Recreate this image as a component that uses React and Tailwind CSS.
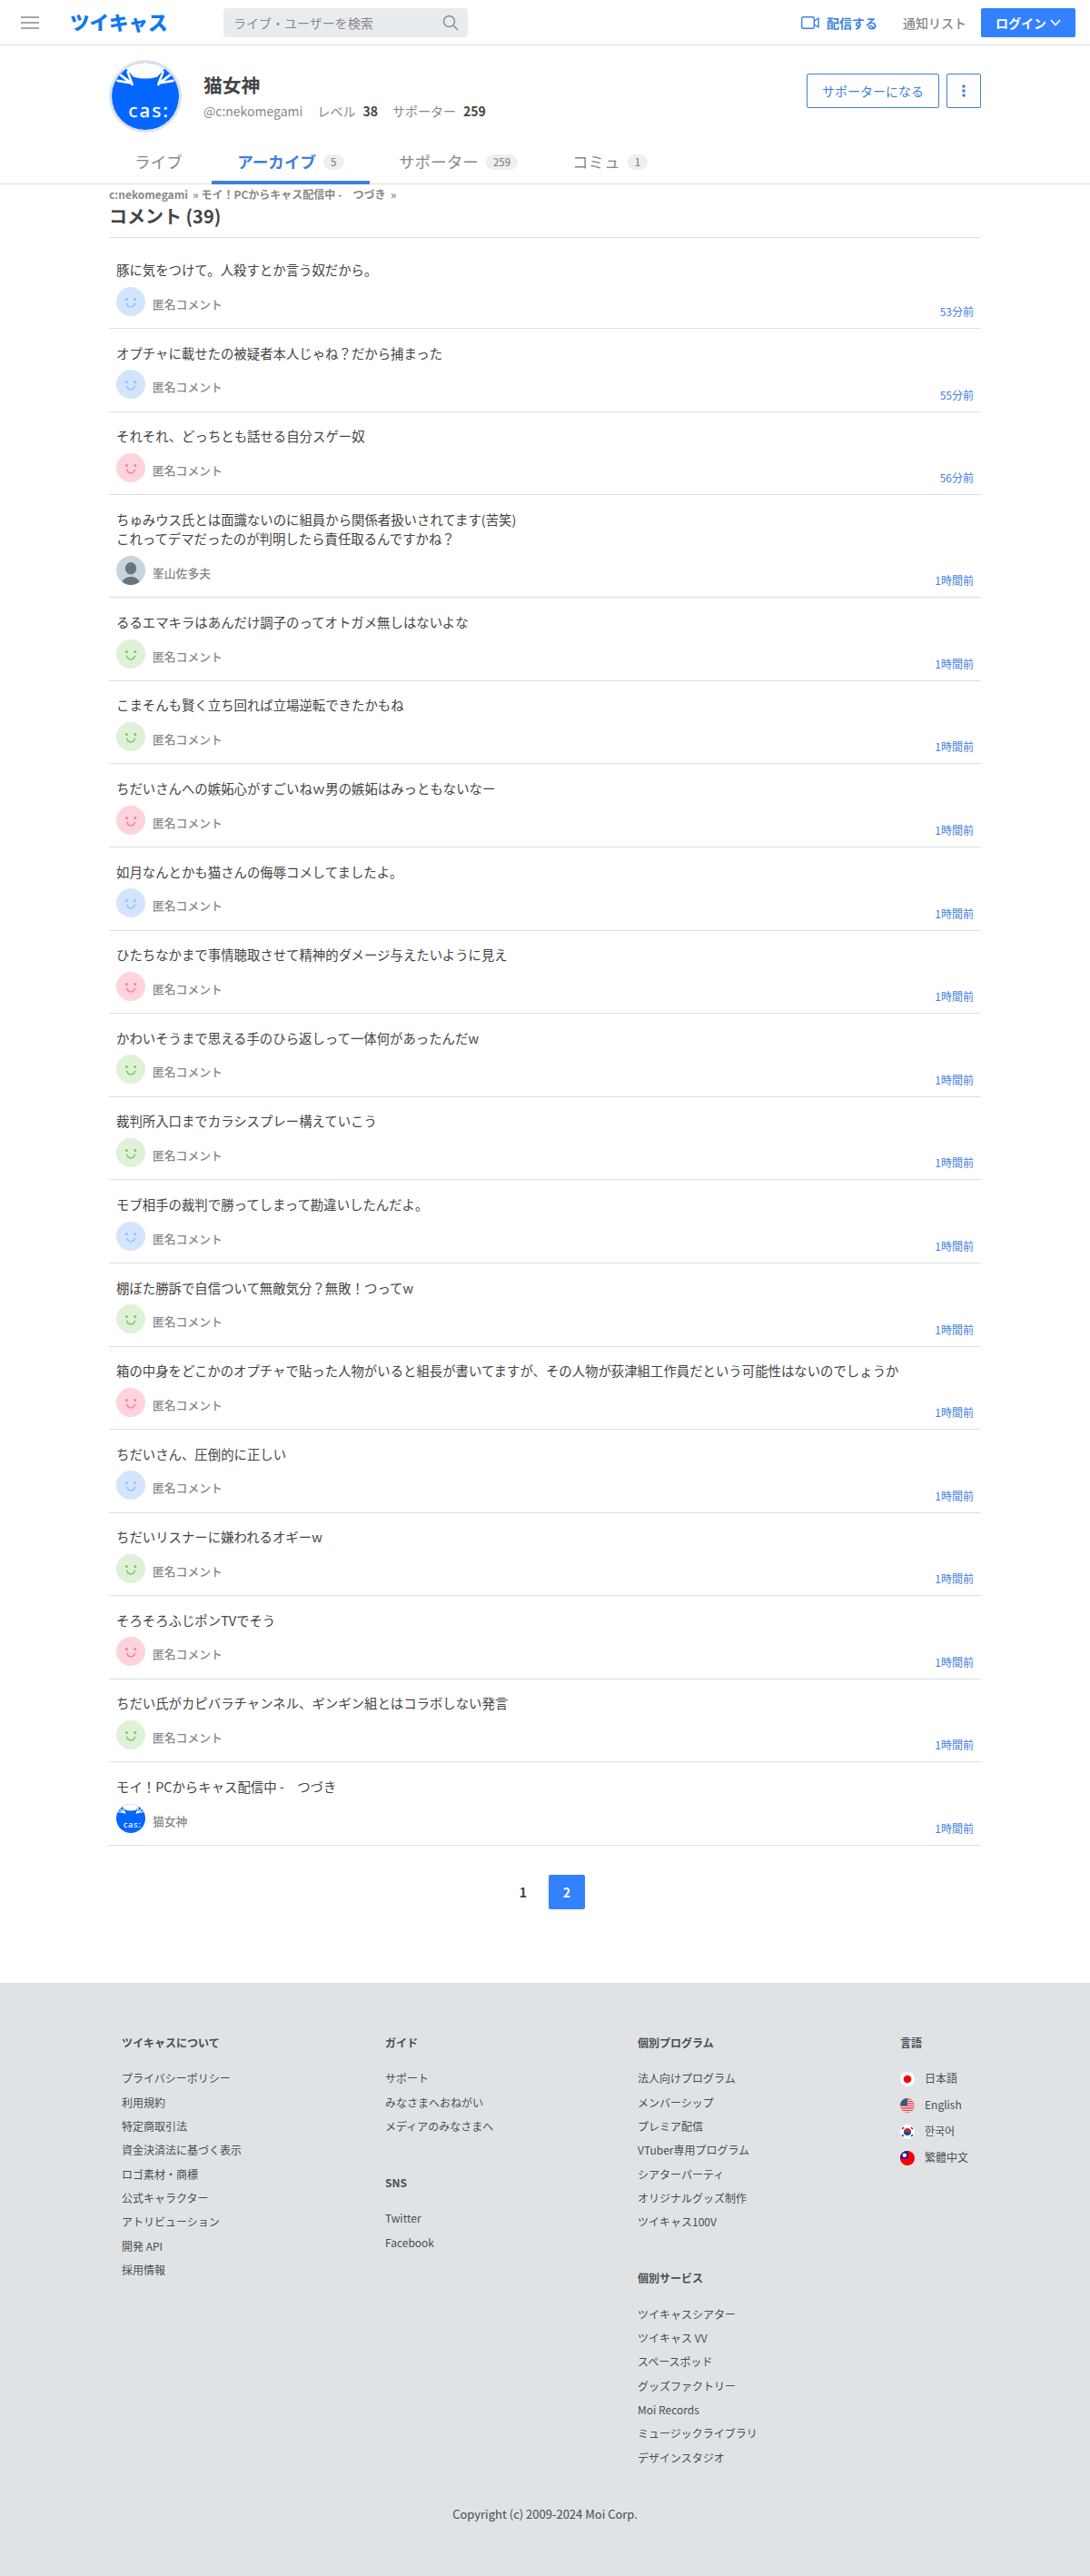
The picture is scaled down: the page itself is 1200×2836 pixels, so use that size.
import React from 'react';

const comments = [
    { text: '豚に気をつけて。人殺すとか言う奴だから。', face: 'blue', time: '53分前' },
    { text: 'オプチャに載せたの被疑者本人じゃね？だから捕まった', face: 'blue', time: '55分前' },
    { text: 'それそれ、どっちとも話せる自分スゲー奴', face: 'pink', time: '56分前' },
    {
        text: 'ちゅみウス氏とは面識ないのに組員から関係者扱いされてます(苦笑)\nこれってデマだったのが判明したら責任取るんですかね？',
        face: 'user',
        name: '峯山佐多夫',
        time: '1時間前',
    },
    { text: 'るるエマキラはあんだけ調子のってオトガメ無しはないよな', face: 'green', time: '1時間前' },
    { text: 'こまそんも賢く立ち回れば立場逆転できたかもね', face: 'green', time: '1時間前' },
    { text: 'ちだいさんへの嫉妬心がすごいねｗ男の嫉妬はみっともないなー', face: 'pink', time: '1時間前' },
    { text: '如月なんとかも猫さんの侮辱コメしてましたよ。', face: 'blue', time: '1時間前' },
    { text: 'ひたちなかまで事情聴取させて精神的ダメージ与えたいように見え', face: 'pink', time: '1時間前' },
    { text: 'かわいそうまで思える手のひら返しって一体何があったんだw', face: 'green', time: '1時間前' },
    { text: '裁判所入口までカラシスプレー構えていこう', face: 'green', time: '1時間前' },
    { text: 'モブ相手の裁判で勝ってしまって勘違いしたんだよ。', face: 'blue', time: '1時間前' },
    { text: '棚ぼた勝訴で自信ついて無敵気分？無敗！つってw', face: 'green', time: '1時間前' },
    {
        text: '箱の中身をどこかのオプチャで貼った人物がいると組長が書いてますが、その人物が荻津組工作員だという可能性はないのでしょうか',
        face: 'pink',
        time: '1時間前',
    },
    { text: 'ちだいさん、圧倒的に正しい', face: 'blue', time: '1時間前' },
    { text: 'ちだいリスナーに嫌われるオギーw', face: 'green', time: '1時間前' },
    { text: 'そろそろふじポンTVでそう', face: 'pink', time: '1時間前' },
    { text: 'ちだい氏がカピバラチャンネル、ギンギン組とはコラボしない発言', face: 'green', time: '1時間前' },
    { text: 'モイ！PCからキャス配信中 -　つづき', face: 'cas', name: '猫女神', time: '1時間前' },
];

const faceColors = {
    blue: { bg: '#d3e5fd', fg: '#9dbcf8' },
    pink: { bg: '#ffd3dc', fg: '#f2809b' },
    green: { bg: '#dff1d7', fg: '#7cc862' },
};

const about = [
    'プライバシーポリシー',
    '利用規約',
    '特定商取引法',
    '資金決済法に基づく表示',
    'ロゴ素材・商標',
    '公式キャラクター',
    'アトリビューション',
    '開発 API',
    '採用情報',
];
const guide = ['サポート', 'みなさまへおねがい', 'メディアのみなさまへ'];
const sns = ['Twitter', 'Facebook'];
const programs = [
    '法人向けプログラム',
    'メンバーシップ',
    'プレミア配信',
    'VTuber専用プログラム',
    'シアターパーティ',
    'オリジナルグッズ制作',
    'ツイキャス100V',
];
const services = [
    'ツイキャスシアター',
    'ツイキャス VV',
    'スペースポッド',
    'グッズファクトリー',
    'Moi Records',
    'ミュージックライブラリ',
    'デザインスタジオ',
];

const CasAvatar = ({ className }) => (
    <svg viewBox="0 0 80 80" className={className}>
        <clipPath id="casClip">
            <circle cx="40" cy="40" r="40" />
        </clipPath>
        <g clipPath="url(#casClip)">
            <rect width="80" height="80" fill="#0566ff" />
            <path d="M0 0H80V23L63 7 54 17Q40 21 26 17L17 7 0 23Z" fill="#fff" />
            <g stroke="#fff" strokeWidth="2.8" strokeLinecap="round">
                <path d="M24.500 26L19 11M24 25L11 15M22 24L7 21.500" />
                <path d="M55.500 26L61 11M56 25L69 15M58 24L73 21.500" />
            </g>
            <text
                x="20"
                y="65"
                fontSize="22"
                textLength="47"
                fill="#fff"
                stroke="#fff"
                strokeWidth="0.500"
                className="font-['Open_Sans',sans-serif]"
            >
                cas:
            </text>
        </g>
    </svg>
);

const UserAvatar = () => (
    <svg viewBox="0 0 32 32" className="size-8 rounded-full">
        <rect width="32" height="32" fill="#c9d4dc" />
        <ellipse cx="16" cy="13.8" rx="6.2" ry="6.8" fill="#667680" />
        <path d="M6 32C6.500 25.500 10.500 23 16 23S25.500 25.500 26 32Z" fill="#667680" />
    </svg>
);

const Face = ({ color }) => (
    <svg viewBox="0 0 32 32" className="size-8 rounded-full">
        <rect width="32" height="32" fill={faceColors[color].bg} />
        <circle cx="11.4" cy="13.6" r="1.500" fill={faceColors[color].fg} />
        <circle cx="20.800" cy="13.6" r="1.500" fill={faceColors[color].fg} />
        <path
            d="M11.800 18.200C12.800 23.200 19.400 23.200 20.400 18.200"
            fill="none"
            stroke={faceColors[color].fg}
            strokeWidth="1.500"
            strokeLinecap="round"
        />
    </svg>
);

const Avatar = ({ face }) => {
    if (face === 'cas') return <CasAvatar className="size-8" />;
    if (face === 'user') return <UserAvatar />;
    return <Face color={face} />;
};

const Badge = ({ children }) => (
    <span className="ml-2 flex h-[17px] items-center rounded-full bg-[#edf0f2] px-2 text-[11.2px] font-medium text-[#888]">
        {children}
    </span>
);

const Tab = ({ label, count, active }) => (
    <a
        className={
            active
                ? 'flex h-[50px] items-center border-b-4 border-[#3f80dc] px-[28.4px] pt-1 text-[17.6px] font-bold text-[#3f80dc]'
                : 'flex h-[50px] items-center border-b-4 border-transparent px-7 pt-1 text-[17.6px] text-[#888]'
        }
    >
        {label}
        {count && <Badge>{count}</Badge>}
    </a>
);

const Comment = ({ text, face, name = '匿名コメント', time }) => (
    <li className="flex items-end justify-between border-b border-[#dcdfe1] px-2 pt-[15.600px] first:pt-[24px]">
        <div>
            <p className="text-[14.4px] leading-[21.6px] whitespace-pre-line text-[#444]">{text}</p>
            <div className="mt-2 mb-[13.4px] flex h-8 items-center gap-2">
                <Avatar face={face} />
                <span className="pt-1.5 text-[12.8px] leading-5 font-medium text-[#888]">{name}</span>
            </div>
        </div>
        <time className="mb-[9px] text-[12px] leading-[18px] text-[#3f80dc]">{time}</time>
    </li>
);

const FooterGroup = ({ title, items }) => (
    <section>
        <h3 className="mb-[21.5px] leading-[18px] font-bold">{title}</h3>
        <ul>
            {items.map((item) => (
                <li key={item} className="h-[26.33px] leading-[18px]">
                    {item}
                </li>
            ))}
        </ul>
    </section>
);

const Flag = ({ children }) => (
    <svg viewBox="0 0 16 16" className="size-4 rounded-full">
        {children}
    </svg>
);

const languages = [
    {
        label: '日本語',
        flag: (
            <Flag>
                <rect width="16" height="16" fill="#fff" />
                <circle cx="8" cy="8" r="4.300" fill="#f00" />
            </Flag>
        ),
    },
    {
        label: 'English',
        flag: (
            <Flag>
                <rect width="16" height="16" fill="#fff" />
                <path
                    d="M0 1H16M0 3.500H16M0 6H16M0 8.500H16M0 11H16M0 13.500H16M0 16H16"
                    stroke="#e8474f"
                    strokeWidth="1.400"
                />
                <rect width="8" height="8" fill="#3d5a80" />
            </Flag>
        ),
    },
    {
        label: '한국어',
        flag: (
            <Flag>
                <rect width="16" height="16" fill="#fff" />
                <path d="M4 8A4 4 0 0 1 12 8Z" fill="#d8232e" />
                <path d="M4 8A4 4 0 0 0 12 8Z" fill="#0f4c9c" />
                <path d="M2 5L4 3M12 3L14 5M2 11L4 13M12 13L14 11" stroke="#444" strokeWidth="1.500" />
            </Flag>
        ),
    },
    {
        label: '繁體中文',
        flag: (
            <Flag>
                <rect width="16" height="16" fill="#fa0000" />
                <rect width="8.500" height="8.500" fill="#1a0fa8" />
                <circle cx="4.800" cy="4.800" r="2.300" fill="#fff" />
            </Flag>
        ),
    },
];

const Header = () => (
    <header className="flex h-[50px] items-center border-b border-[#dcdfe1] pr-4 pl-[23px]">
        <svg viewBox="0 0 20 14" className="h-[14px] w-5" stroke="#888" strokeWidth="1.600">
            <path d="M0 1H20M0 7H20M0 13H20" />
        </svg>
        <span className="mb-0.5 ml-[34px] w-[107px] text-[21.5px] leading-none font-black whitespace-nowrap text-[#0f79f3]">
            ツイキャス
        </span>
        <div className="ml-[62px] flex h-8 w-[269px] items-center justify-between rounded bg-[#e9ecef] pr-[10px] pl-[11px] text-sm text-[#888]">
            <span>ライブ・ユーザーを検索</span>
            <svg viewBox="0 0 18 18" className="size-[18px]" fill="none" stroke="#888" strokeWidth="1.400">
                <circle cx="7.500" cy="7.500" r="6" />
                <path d="M12 12L17 17" />
            </svg>
        </div>
        <a className="ml-auto flex items-center gap-2 text-sm font-bold text-[#3f80dc]">
            <svg viewBox="0 0 20 14" className="h-[14px] w-5" fill="none" stroke="#3f80dc" strokeWidth="1.400">
                <rect x="0.700" y="0.700" width="13.600" height="12.600" rx="1.500" />
                <path d="M14.300 5.200L19.200 2V12L14.300 8.800" strokeLinejoin="round" />
            </svg>
            配信する
        </a>
        <a className="ml-7 text-sm font-medium text-[#888]">通知リスト</a>
        <button className="ml-4 flex h-8 w-[104px] items-center justify-center gap-1 rounded-xs bg-[#3381ff] text-sm font-bold text-white">
            ログイン
            <svg viewBox="0 0 12 8" className="h-2 w-3" fill="none" stroke="#fff" strokeWidth="1.800">
                <path d="M1 1L6 6.500L11 1" />
            </svg>
        </button>
    </header>
);

const Profile = () => (
    <div className="h-[153px] border-b border-[#dcdfe1]">
        <div className="mx-auto w-[960px]">
            <div className="flex h-[103px] items-start pt-4">
                <div className="size-20 rounded-full border-[3px] border-[#dfe3e6]">
                    <CasAvatar className="size-full" />
                </div>
                <div className="ml-6 pt-[11px]">
                    <h1 className="text-[20.8px] leading-[32px] font-bold text-[#444]">猫女神</h1>
                    <p className="mt-[2px] flex text-sm leading-[22px] whitespace-nowrap text-[#888]">
                        <span>@c:nekomegami</span>
                        <span className="ml-4">レベル</span>
                        <b className="ml-2 text-[#444]">38</b>
                        <span className="ml-4">サポーター</span>
                        <b className="ml-2 text-[#444]">259</b>
                    </p>
                </div>
                <button className="mt-[15px] ml-auto h-[38px] w-[146px] rounded-xs border border-[#3f80c8] text-sm text-[#3f80dc]">
                    サポーターになる
                </button>
                <button className="mt-[15px] ml-2 flex h-[38px] w-[38px] items-center justify-center rounded-xs border border-[#3f80c8]">
                    <svg viewBox="0 0 4 14" className="h-[14px] w-1" fill="#3f80dc">
                        <circle cx="2" cy="2" r="1.800" />
                        <circle cx="2" cy="7" r="1.800" />
                        <circle cx="2" cy="12" r="1.800" />
                    </svg>
                </button>
            </div>
            <nav className="flex gap-1">
                <Tab label="ライブ" />
                <Tab label="アーカイブ" count="5" active />
                <Tab label="サポーター" count="259" />
                <Tab label="コミュ" count="1" />
            </nav>
        </div>
    </div>
);

const Footer = () => (
    <footer className="h-[653px] bg-[#dfe3e6] pt-[57px] text-[12px] text-[#4a4d50]">
        <div className="flex h-[502px] pl-[134px]">
            <div className="w-[290px]">
                <FooterGroup title="ツイキャスについて" items={about} />
            </div>
            <div className="flex w-[278px] flex-col gap-[35.500px]">
                <FooterGroup title="ガイド" items={guide} />
                <FooterGroup title="SNS" items={sns} />
            </div>
            <div className="flex w-[289px] flex-col gap-[35.500px]">
                <FooterGroup title="個別プログラム" items={programs} />
                <FooterGroup title="個別サービス" items={services} />
            </div>
            <section>
                <h3 className="mb-[21px] leading-[18px] font-bold">言語</h3>
                <ul>
                    {languages.map(({ label, flag }) => (
                        <li key={label} className="flex h-[29px] items-start gap-[11px] leading-[18px]">
                            <span className="mt-[2px]">{flag}</span>
                            {label}
                        </li>
                    ))}
                </ul>
            </section>
        </div>
        <p className="mt-4 text-center text-[13px] leading-5">Copyright (c) 2009-2024 Moi Corp.</p>
    </footer>
);

function App() {
    return (
        <div lang="ja" className="min-h-[2836px] bg-white font-['Noto_Sans_CJK_JP','Noto_Sans_CJK_KR',sans-serif]">
            <Header />
            <Profile />
            <main className="mx-auto w-[960px]">
                <p className="pt-[2px] text-[12px] leading-[18px] font-bold whitespace-pre text-[#888]">
                    c:nekomegami  » モイ！PCからキャス配信中 -　つづき  »
                </p>
                <h2 className="h-[39px] border-b border-[#dcdfe1] text-[20px] leading-[30px] font-bold text-[#444]">
                    コメント (39)
                </h2>
                <ul>
                    {comments.map((comment) => (
                        <Comment key={comment.text} {...comment} />
                    ))}
                </ul>
                <div className="flex h-[151px] justify-center gap-2 pt-8 text-sm font-bold">
                    <a className="flex h-[38px] w-10 items-center justify-center text-[#444]">1</a>
                    <a className="flex h-[38px] w-10 items-center justify-center rounded-xs bg-[#3381ff] text-white">2</a>
                </div>
            </main>
            <Footer />
        </div>
    );
}

export default App;
